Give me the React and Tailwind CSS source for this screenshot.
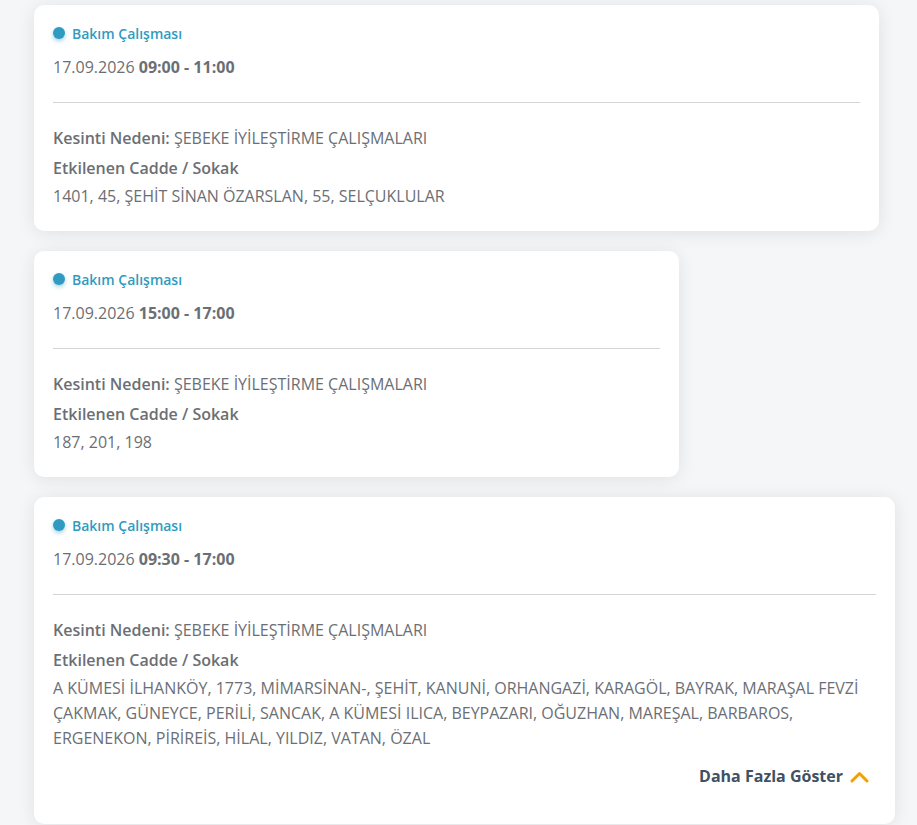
import React from "react";

const cards = [
  {
    w: "w-[845px]",
    time: "09:00 - 11:00",
    reason: "ŞEBEKE İYİLEŞTİRME ÇALIŞMALARI",
    streets: "1401, 45, ŞEHİT SİNAN ÖZARSLAN, 55, SELÇUKLULAR",
  },
  {
    w: "w-[645px]",
    time: "15:00 - 17:00",
    reason: "ŞEBEKE İYİLEŞTİRME ÇALIŞMALARI",
    streets: "187, 201, 198",
  },
  {
    w: "w-[861px]",
    time: "09:30 - 17:00",
    reason: "ŞEBEKE İYİLEŞTİRME ÇALIŞMALARI",
    streets:
      "A KÜMESİ İLHANKÖY, 1773, MİMARSİNAN-, ŞEHİT, KANUNİ, ORHANGAZİ, KARAGÖL, BAYRAK, MARAŞAL FEVZİ ÇAKMAK, GÜNEYCE, PERİLİ, SANCAK, A KÜMESİ ILICA, BEYPAZARI, OĞUZHAN, MAREŞAL, BARBAROS, ERGENEKON, PİRİREİS, HİLAL, YILDIZ, VATAN, ÖZAL",
    more: true,
  },
];

function Card({ c }) {
  return (
    <div
      className={`${c.w} bg-white rounded-[10px] shadow-[0_2px_18px_rgba(0,0,0,0.09)] px-[19px] pt-[18px] ${c.more ? "pb-[36px]" : "pb-[22px]"}`}
    >
      <div className="flex items-center gap-[7px] h-[20px]">
        <span className="w-[12px] h-[12px] rounded-full bg-[#2f9bc1] shadow-[0_2px_4px_rgba(47,155,193,0.45)]" />
        <span className="text-[14px] font-semibold text-[#2f9bc1]">Bakım Çalışması</span>
      </div>
      <div className="mt-[13px] text-[16px] text-[#6b6f75] leading-[22px]">
        17.09.2026 <span className="font-bold">{c.time}</span>
      </div>
      <div className="mt-[24px] h-px bg-[#d4d4d4]" />
      <div className="mt-[20px] text-[16px] text-[#6b6f75] leading-[30px]">
        <div>
          <span className="font-semibold">Kesinti Nedeni:</span> {c.reason}
        </div>
        <div className="font-semibold">Etkilenen Cadde / Sokak</div>
        <div className="leading-[25px] pt-[1px]">{c.streets}</div>
      </div>
      {c.more && (
        <div className="mt-[13px] flex justify-end items-center gap-[7px] pr-[7px]">
          <span className="text-[16px] font-bold text-[#3f5163]">Daha Fazla Göster</span>
          <svg width="19" height="13" viewBox="0 0 19 13" fill="none">
            <path d="M2 11 L9.5 3.5 L17 11" stroke="#f5a000" strokeWidth="3" strokeLinecap="round" strokeLinejoin="round" />
          </svg>
        </div>
      )}
    </div>
  );
}

export default function App() {
  return (
    <div
      className="min-h-[825px] bg-[#f5f6f8] pl-[34px] pt-[5px] flex flex-col gap-[20px]"
      style={{ fontFamily: '"Open Sans", sans-serif' }}
    >
      {cards.map((c, i) => (
        <Card key={i} c={c} />
      ))}
    </div>
  );
}
